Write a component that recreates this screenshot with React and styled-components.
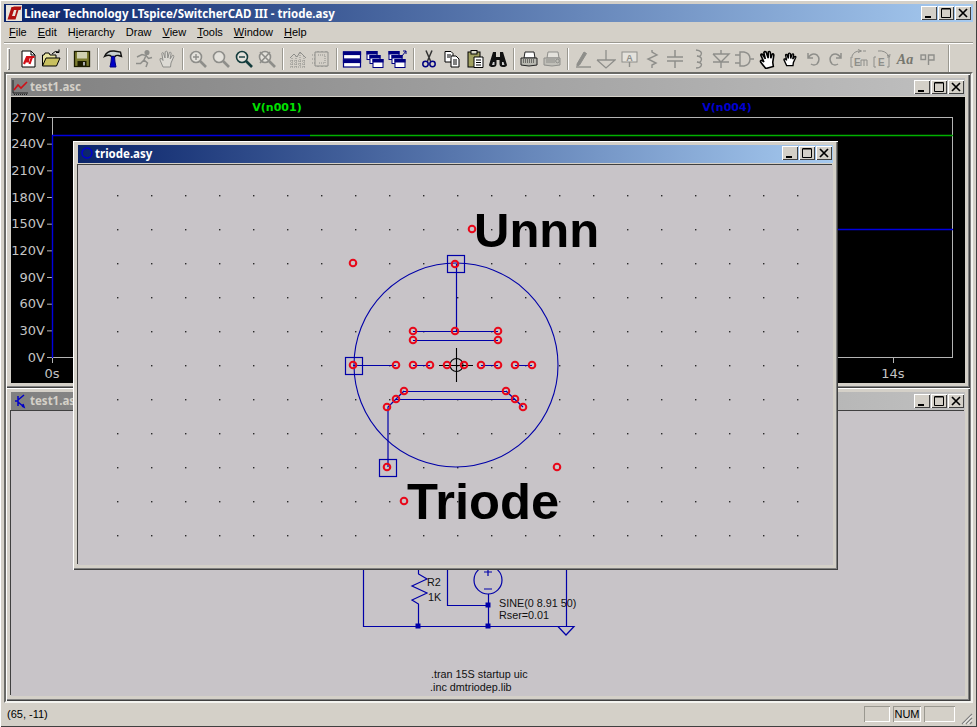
import styled, { createGlobalStyle } from "styled-components";

const GlobalStyle = createGlobalStyle`
  html, body { margin: 0; padding: 0; background: #d4d0c8; }
  body { width: 977px; height: 727px; overflow: hidden; font-family: "Liberation Sans", sans-serif; }
`;

const GREY = "#8e8e8a";
const NAVY = "#000080";
const WIRE = "#0000a8";
const PIN = "#e8081a";

const menus = [
  ["F", "ile"],
  ["E", "dit"],
  ["H", "ierarchy", 1],
  ["", "Draw"],
  ["V", "iew"],
  ["T", "ools"],
  ["W", "indow"],
  ["H", "elp"],
];

const handPath =
  "M6 18 L3 11 Q2.5 9 4.5 9.5 L6 11.5 L4.8 4.5 Q5 3 6.5 4 L8 9 L8.2 2.8 Q9.3 1.6 10.4 2.8 L10.8 9 L12.4 3.4 Q13.6 2.6 14.2 4 L13.2 9.8 L15.6 6.2 Q17 6 16.8 7.6 L14 14 L13.5 18 Z";

function Lens({ color, children }) {
  return (
    <g fill="none" stroke={color}>
      <circle cx="8" cy="8" r="5.5" strokeWidth="1.6" fill="#e4e2dc" />
      <path d="M12 12 L18 18" strokeWidth="2.6" />
      {children}
    </g>
  );
}

function Cascade({ arrow }) {
  return (
    <g fill="#fff" stroke={NAVY}>
      <rect x={arrow ? 1 : 2} y="2.5" width="10" height="8" />
      <rect x={arrow ? 1 : 2} y="2.5" width="10" height="2.5" fill={NAVY} />
      <rect x={arrow ? 4 : 5} y="6.5" width="10" height="8" />
      <rect x={arrow ? 4 : 5} y="6.5" width="10" height="2.5" fill={NAVY} />
      <rect x={arrow ? 7 : 8} y="10.5" width="10" height="8" />
      <rect x={arrow ? 7 : 8} y="10.5" width="10" height="2.5" fill={NAVY} />
      {arrow && <path d="M14 7 L18 2 M15 2 H18 V5" fill="none" />}
    </g>
  );
}

const tools = [
  <g key="new">
    <path d="M4 2 H13 L17 6 V18 H4 Z" fill="#fff" stroke="#000" />
    <path d="M13 2 V6 H17" fill="none" stroke="#000" />
    <path d="M6 15 L9 8 H11 L9.5 12.5 H11 M10.5 8 H16.5 M14 8 L11.5 15" fill="none" stroke="#d01018" strokeWidth="2.2" />
  </g>,
  <g key="open">
    <path d="M1.5 17 V6 H3 L4 4 H8 L9 6 H15 V9" fill="#e8e4a0" stroke="#000" />
    <path d="M1.5 17 L5 9 H19 L15.5 17 Z" fill="#c8c060" stroke="#000" />
    <path d="M11 5 Q14 1 18 3 M18 0.5 V3.5 H15" fill="none" stroke="#000" />
  </g>,
  "sep",
  <g key="save">
    <rect x="2.5" y="2.5" width="15" height="15" fill="#7c7c30" stroke="#1c1c00" strokeWidth="1.3" />
    <rect x="5" y="3" width="10" height="6.5" fill="#d0d0b0" />
    <rect x="5.5" y="12" width="9" height="5.5" fill="#1c1c00" />
    <rect x="11" y="13" width="2" height="3.5" fill="#aaa" />
  </g>,
  "sep",
  <g key="hammer">
    <path d="M1.5 7.5 Q4 1.5 11 2 L17.5 3 L18.5 7.5 L15.5 6.5 Q13 6 12 7.5 H8.5 Q6 5 1.5 7.5 Z" fill="#c8d0d0" stroke="#111" strokeWidth="1.4" />
    <path d="M8.5 7.5 H11.5 L12 13 L13 18 H7 L8 13 Z" fill="#0000c8" stroke={NAVY} />
  </g>,
  "sep",
  <g key="run" fill="none" stroke={GREY} strokeWidth="1.5">
    <circle cx="13" cy="3.5" r="1.8" fill={GREY} />
    <path d="M3 8 L8 5.5 L12 6.5 L10 11 L13.5 14 L12 18 M10 11 L6.5 14.5 L2 14.5 M12 6.5 L14.5 9.5 L18 8.5" />
  </g>,
  <path key="hand" d={handPath} fill="#dcdad4" stroke={GREY} />,
  "sep",
  <Lens key="zin" color={GREY}><path d="M5 8 H11 M8 5 V11" strokeWidth="1.4" /></Lens>,
  <Lens key="zfit" color={GREY} />,
  <Lens key="zout" color="#143c3c"><path d="M5 8 H11" strokeWidth="1.4" /></Lens>,
  <Lens key="zx" color={GREY}><path d="M3 3 L14 14 M13 3 L3 14" strokeWidth="1.6" /></Lens>,
  "sep",
  <g key="wave" fill="none" stroke={GREY}>
    <path d="M2 9 L6 5 L9 8 L12 3 L18 9" />
    <path d="M2 12 H18 M2 15 H18 M2 18 H18 M4 9 V18 M8 7 V18 M12 4 V18 M16 7 V18" strokeDasharray="1 1" />
  </g>,
  <g key="square" fill="none" stroke={GREY}>
    <path d="M4 3 H17 V17 H4 Z" />
    <path d="M1 6 H4 M1 10 H4 M1 14 H4 M7 17 V19 M11 17 V19 M15 17 V19 M7 3 V1 M11 3 V1 M15 3 V1" strokeDasharray="1 1" />
    <path d="M7 6 H14 V14 H7" strokeDasharray="1 1" />
  </g>,
  "sep",
  <g key="tile" fill="#fff" stroke={NAVY} strokeWidth="1.2">
    <rect x="1.5" y="3" width="17" height="7" />
    <rect x="1.5" y="3" width="17" height="2.5" fill={NAVY} />
    <rect x="1.5" y="11" width="17" height="7" />
    <rect x="1.5" y="11" width="17" height="2.5" fill={NAVY} />
  </g>,
  <Cascade key="casc" />,
  <Cascade key="casca" arrow />,
  "sep",
  <g key="cut" fill="none" stroke={NAVY} strokeWidth="1.5">
    <path d="M7 1.5 L11.5 12 M13 1.5 L8.5 12" stroke="#333" />
    <circle cx="6.5" cy="15" r="2.7" />
    <circle cx="13.5" cy="15" r="2.7" />
  </g>,
  <g key="copy" stroke="#000" fill="#fff">
    <path d="M3 2.5 H9 L11 4.5 V13 H3 Z" />
    <path d="M9 7 H14 L17 10 V18 H9 Z" />
    <path d="M5 6 H9 M5 8 H8 M11 11 H15 M11 13 H15 M11 15 H15" fill="none" />
  </g>,
  <g key="paste" stroke="#000">
    <rect x="3" y="3" width="12" height="15" fill="#a0a060" />
    <rect x="6" y="1.5" width="6" height="3.5" fill="#d8d8c8" />
    <path d="M9 8 H18 V18.5 H9 Z" fill="#fff" />
    <path d="M11 11 H16 M11 13.5 H16 M11 16 H16" fill="none" />
  </g>,
  <g key="bino" fill="#111">
    <path d="M5 3 H8 V8 H12 V3 H15 L19 16 Q18.5 18 15 18 Q11.5 18 11.5 15 V11 H8.5 V15 Q8.5 18 5 18 Q1.5 18 1 16 Z" />
    <path d="M5 13 H6.5 V16 H4 Z M14 13 H15.5 L16.5 16 H14 Z" fill="#ccc" />
  </g>,
  "sep",
  <g key="print" stroke="#222">
    <path d="M6 3 H15 L16 9 H5 Z" fill="#fff" />
    <path d="M2 9 H18 V16 Q10 18 2 16 Z" fill="#b8b8b0" />
    <path d="M4 11 H16 M4 13 H16" strokeDasharray="1 1" />
  </g>,
  <g key="print2" stroke={GREY}>
    <path d="M6 3 H16 L17 9 H5 Z" fill="#e4e2dc" />
    <path d="M2 9 H18 V16 Q10 18 2 16 Z" fill="#c0bfb8" />
    <path d="M4 11 H13 M4 13 H13" />
    <circle cx="15.5" cy="12" r="1.8" fill="none" />
  </g>,
  "sep",
  <g key="pencil" fill="none" stroke={GREY}>
    <path d="M4 15 L11 3 L13.5 4.5 L6.5 16 L4 17 Z" fill={GREY} />
    <path d="M3 18 H18" strokeWidth="1.4" />
  </g>,
  <g key="gnd" fill="none" stroke={GREY} strokeWidth="1.3">
    <path d="M10 1 V11 M1 11 H19 L10 19 L1 11" />
  </g>,
  <g key="label" fill="none" stroke={GREY}>
    <rect x="3" y="3" width="15" height="10" fill="#e4e2dc" />
    <path d="M10.5 13 V18" strokeWidth="1.4" />
    <text x="10.5" y="11.5" fontSize="9" fontWeight="700" fontFamily="Liberation Sans" textAnchor="middle" fill={GREY} stroke="none">A</text>
  </g>,
  <path key="res" d="M10 1 V3 L15 6 L6 10 L14 14 L10 16 V19" fill="none" stroke={GREY} strokeWidth="1.4" />,
  <path key="cap" d="M10 1 V8 M2 8 H18 M2 12 H18 M10 12 V19" fill="none" stroke={GREY} strokeWidth="1.5" />,
  <path key="ind" d="M8 1 Q15 2 13 6 Q12 8 9 7 Q15 8 13 12 Q12 14 9 13 Q15 14 13 17 Q12 19 8 19" fill="none" stroke={GREY} strokeWidth="1.4" />,
  <path key="diode" d="M10 1 V5 M2 5 H18 L10 13 L2 5 M2 13 H18 M10 13 V19" fill="none" stroke={GREY} strokeWidth="1.4" />,
  <path key="gate" d="M1 6 H6 M1 14 H6 M6 3 H10 Q16 4 16 10 Q16 16 10 17 H6 Z M16 10 H20" fill="none" stroke={GREY} strokeWidth="1.4" />,
  <path key="open2" d={handPath} fill="#fff" stroke="#000" strokeWidth="1.5" transform="rotate(-15 10 10) scale(1.05)" />,
  <path key="hand2" d={handPath} fill="#fff" stroke="#000" strokeWidth="1.6" transform="translate(1.5 2.5) scale(0.85 0.78)" />,
  <path key="undo" d="M5 4 V9 H10 M5 9 Q9 3 14 6 Q18 10 14 15 Q11 17 8 15" fill="none" stroke={GREY} strokeWidth="1.5" />,
  <path key="redo" d="M15 4 V9 H10 M15 9 Q11 3 6 6 Q2 10 6 15 Q9 17 12 15" fill="none" stroke={GREY} strokeWidth="1.5" />,
  <g key="e1" fill="none" stroke={GREY}>
    <path d="M3 7 Q5 2 11 2 M9 0.5 L12.5 2 L9 3.5 M14 2 H17" />
    <path d="M4 8 H2 V18 H4" />
    <text x="5" y="17" fontSize="10" fontFamily="Liberation Sans" fontWeight="700" fill={GREY} stroke="none">E</text>
    <path d="M12 11 V17 M15 11 V17 M18 11 V17 M12 11 H18" />
  </g>,
  <g key="e2" fill="none" stroke={GREY}>
    <path d="M6 2 Q13 1 17 7 M15 6 L17.5 8 L18 5" />
    <path d="M4 8 H2 V18 H4 M15 8 H17 V18 H15" />
    <text x="6" y="17" fontSize="10" fontFamily="Liberation Sans" fontWeight="700" fill={GREY} stroke="none">E</text>
  </g>,
  <text key="aa" x="10" y="15" textAnchor="middle" fontSize="14" fontStyle="italic" fontWeight="700" fontFamily="Liberation Serif" fill="#77776f">Aa</text>,
  <g key="op" fill="none" stroke={GREY} strokeWidth="1.4">
    <rect x="3" y="6" width="4.5" height="4.5" />
    <path d="M10.5 16 V6 H16 V11 H10.5" />
  </g>,
];

function WindowControls({ small }) {
  return (
    <CaptionButtons $small={small}>
      <CaptionButton $gap>
        <svg width="16" height="14" viewBox="0 0 16 14"><rect x="4" y="10" width="6" height="2" fill="#000" /></svg>
      </CaptionButton>
      <CaptionButton $gap>
        <svg width="16" height="14" viewBox="0 0 16 14"><path d="M3.5 3 H12.5 V11.5 H3.5 Z M3.5 2.5 H12.5" fill="none" stroke="#000" /></svg>
      </CaptionButton>
      <CaptionButton>
        <svg width="16" height="14" viewBox="0 0 16 14"><path d="M4 3 L12 11 M12 3 L4 11" stroke="#000" strokeWidth="1.7" /></svg>
      </CaptionButton>
    </CaptionButtons>
  );
}

function PlotWaves() {
  const volts = [270, 240, 210, 180, 150, 120, 90, 60, 30, 0];
  return (
    <PlotSvg width="954" height="286" viewBox="11 97 954 286">
      <rect x="52.5" y="117.5" width="900" height="240" fill="none" stroke="#b4b4b4" />
      {volts.map((v, i) => {
        const y = 117.5 + i * 26.67;
        return (
          <g key={v}>
            <path d={`M47 ${y} H52`} stroke="#b4b4b4" />
            <PlotLabel x="45" y={y + 4} textAnchor="end">{v}V</PlotLabel>
          </g>
        );
      })}
      <path d="M52.5 358 V363 M893.5 358 V363" stroke="#b4b4b4" />
      <PlotLabel x="52" y="378" textAnchor="middle">0s</PlotLabel>
      <PlotLabel x="893" y="378" textAnchor="middle">14s</PlotLabel>
      <TraceLabel x="277" y="111" textAnchor="middle" fill="#00e000">V(n001)</TraceLabel>
      <TraceLabel x="727" y="111" textAnchor="middle" fill="#0000d0">V(n004)</TraceLabel>
      <path d="M310 135.5 H953" stroke="#00b000" strokeWidth="1.4" />
      <path d="M52.5 358 V135.5 H310" stroke="#0000e0" strokeWidth="1.4" fill="none" />
      <path d="M838 229.5 H953" stroke="#0000e0" strokeWidth="1.4" />
    </PlotSvg>
  );
}

function Schematic() {
  return (
    <PlotSvg width="954" height="285" viewBox="11 411 954 285">
      <g fill="none" stroke={WIRE} strokeWidth="1.2">
        <path d="M363.5 540 V626.5 H566.5 V540" />
        <path d="M418.5 560 V574 L427 579 L412 586 L427 593 L412 600 L418.5 604 V626" />
        <path d="M447.5 540 V605.5 H488.5 M488.5 594 V626" />
        <circle cx="488" cy="580" r="14" />
        <path d="M484 572 H492 M488 568 V576 M484 589 H492" />
        <path d="M558 626.5 H574 L566 635 Z" />
      </g>
      <g fill={WIRE}>
        <rect x="415.5" y="623.5" width="5" height="5" />
        <rect x="485.5" y="623.5" width="5" height="5" />
        <rect x="485.5" y="602.5" width="5" height="5" />
      </g>
      <NetText x="427" y="586">R2</NetText>
      <NetText x="428" y="601">1K</NetText>
      <NetText x="499" y="607">SINE(0 8.91 50)</NetText>
      <NetText x="499" y="619">Rser=0.01</NetText>
      <NetText x="431" y="678">.tran 15S startup uic</NetText>
      <NetText x="430" y="691">.inc dmtriodep.lib</NetText>
    </PlotSvg>
  );
}

function TriodeSymbol() {
  const dots = [];
  for (let x = 117; x < 800; x += 34) {
    for (let y = 195; y < 540; y += 34) {
      dots.push(<rect key={`${x}-${y}`} x={x} y={y} width="1.4" height="1.4" fill="#2a2a2a" />);
    }
  }
  const pins = [
    [353, 263], [472, 229], [557, 467], [404, 501], [387, 467], [455, 264],
    [413, 331], [413, 340], [498, 331], [498, 340], [455, 331],
    [353, 365], [396, 365], [413, 365], [430, 365], [447, 365], [464, 365],
    [481, 365], [498, 365], [515, 365], [532, 365],
    [404, 391], [396, 399], [387, 407], [506, 391], [515, 399], [523, 407],
  ];
  return (
    <PlotSvg width="755" height="400" viewBox="78 165 755 400">
      {dots}
      <g fill="none" stroke={WIRE} strokeWidth="1.2">
        <circle cx="456" cy="365" r="102" strokeWidth="1.1" />
        <rect x="447.5" y="255.5" width="17" height="17" />
        <rect x="345.5" y="357.5" width="17" height="17" />
        <rect x="379.5" y="459.5" width="17" height="17" />
        <path d="M456.5 264 V331" />
        <path d="M413 331.5 H498 M413 340.5 H498" />
        <path d="M353 365.5 H396 M413 365.5 H430 M447 365.5 H464 M481 365.5 H498 M515 365.5 H532" />
        <path d="M404 391.5 H506 M396 399.5 H515" />
        <path d="M388 467 V407 L404 391 M506 391 L523 407" />
      </g>
      <g fill="none" stroke="#000" strokeWidth="1.1">
        <circle cx="456.5" cy="365" r="6.5" />
        <path d="M439 365.5 H473 M456.5 348 V382" />
      </g>
      <g fill="none" stroke={PIN} strokeWidth="2">
        {pins.map(([x, y]) => <circle key={`${x}-${y}`} cx={x} cy={y} r="3.3" />)}
      </g>
      <BigText x="474" y="247" $size={49}>Unnn</BigText>
      <BigText x="407" y="519" $size={50.7}>Triode</BigText>
    </PlotSvg>
  );
}

export default function App() {
  return (
    <Frame>
      <GlobalStyle />
      <AppCaption>
        <Logo>
          <svg width="16" height="16" viewBox="0 0 16 16">
            <rect width="16" height="16" fill="#e8e4dc" />
            <path d="M1.5 14.5 L5.5 2 H9 L6 11 H9 L8 14.5 Z M7.5 1.5 H15.5 L14.5 5 H12.5 L9.5 14.5 H8 L10.5 5 H7 Z" fill="#b01010" />
          </svg>
        </Logo>
        <AppTitle>Linear Technology LTspice/SwitcherCAD III - triode.asy</AppTitle>
        <WindowControls />
      </AppCaption>
      <MenuBar>
        {menus.map(([key, rest, second]) => (
          <MenuItem key={rest}>
            {second ? <>H<u>i</u>{rest.slice(1)}</> : <><u>{key}</u>{rest}</>}
          </MenuItem>
        ))}
      </MenuBar>
      <ToolBar>
        <Gripper />
        {tools.map((tool, i) =>
          tool === "sep" ? (
            <ToolSep key={i} />
          ) : (
            <ToolButton key={i}>
              <svg width="20" height="20" viewBox="0 0 20 20">{tool}</svg>
            </ToolButton>
          )
        )}
        <ToolEnd />
      </ToolBar>
      <Desktop>
        <MdiWindow $x={0} $y={0} $w={964} $h={314}>
          <MdiCaption>
            <MdiIcon>
              <svg width="17" height="16" viewBox="0 0 17 16">
                <path d="M1 1 V14 H16" fill="none" stroke="#222" />
                <path d="M2 11 L6 6 L9 9 L15 3" fill="none" stroke="#d01018" strokeWidth="1.6" />
                <path d="M2 15.5 H16" stroke="#222" strokeDasharray="1 1" />
              </svg>
            </MdiIcon>
            <MdiTitle>test1.asc</MdiTitle>
            <WindowControls small />
          </MdiCaption>
          <PlotBody><PlotWaves /></PlotBody>
        </MdiWindow>
        <MdiWindow $x={0} $y={314} $w={964} $h={313}>
          <MdiCaption>
            <MdiIcon>
              <svg width="17" height="16" viewBox="0 0 17 16">
                <path d="M3 8 H6 M6 3 V13 M6 7 L12 2 M6 9 L12 14 M10 13 L12 14 L11 11" fill="none" stroke="#0000c8" strokeWidth="1.5" />
              </svg>
            </MdiIcon>
            <MdiTitle>test1.asc</MdiTitle>
            <WindowControls small />
          </MdiCaption>
          <SheetBody><Schematic /></SheetBody>
        </MdiWindow>
        <MdiWindow $x={67} $y={67} $w={765} $h={429} $front>
          <MdiCaption $active>
            <MdiIcon $narrow>
              <svg width="14" height="14" viewBox="0 0 14 14">
                <circle cx="7" cy="7" r="5" fill="none" stroke="#0000d0" strokeWidth="1.5" />
              </svg>
            </MdiIcon>
            <MdiTitle $active>triode.asy</MdiTitle>
            <WindowControls small />
          </MdiCaption>
          <SheetBody><TriodeSymbol /></SheetBody>
        </MdiWindow>
      </Desktop>
      <StatusBar>
        <StatusText>(65, -11)</StatusText>
        <StatusCell $w={26} />
        <StatusCell $w={28}>NUM</StatusCell>
        <StatusCell $w={31} />
        <Grip>
          <svg width="13" height="13" viewBox="0 0 13 13">
            <path d="M12 2 L2 12 M12 6 L6 12 M12 10 L10 12" stroke="#808080" strokeWidth="1.2" />
            <path d="M12 3.5 L3.5 12 M12 7.5 L7.5 12" stroke="#fff" />
          </svg>
        </Grip>
      </StatusBar>
    </Frame>
  );
}

const Frame = styled.div`
  width: 977px;
  height: 727px;
  box-sizing: border-box;
  padding: 4px 4px 2px;
  display: flex;
  flex-direction: column;
  background: #d4d0c8;
  box-shadow: inset 1px 1px #fff, inset -1px -1px #404040;
`;

const AppCaption = styled.div`
  height: 18px;
  flex: none;
  display: flex;
  align-items: center;
  padding-left: 2px;
  background: linear-gradient(90deg, #0a246a, #a6caf0);
`;

const Logo = styled.div`
  width: 16px;
  height: 16px;
  margin-right: 2px;
  flex: none;
  svg { display: block; }
`;

const AppTitle = styled.div`
  flex: 1;
  color: #fff;
  font: 700 11.5px "Noto Sans", "Liberation Sans", sans-serif;
  white-space: nowrap;
`;

const CaptionButtons = styled.div`
  display: flex;
  flex: none;
  align-items: center;
  margin-right: ${({ $small }) => ($small ? "1px" : "2px")};
`;

const CaptionButton = styled.div`
  width: 16px;
  height: 14px;
  margin-right: ${({ $gap }) => ($gap ? "1px" : "0")};
  background: #d4d0c8;
  box-shadow: inset 1px 1px #fff, inset -1px -1px #404040;
  svg { display: block; }
`;

const MenuBar = styled.div`
  height: 19px;
  box-sizing: border-box;
  flex: none;
  margin-top: 1px;
  margin-bottom: 1px;
  padding: 0 0 2px 5px;
  display: flex;
  align-items: center;
  gap: 11px;
  box-shadow: 0 1px #9a9890, 0 2px #fff;
`;

const MenuItem = styled.span`
  font: 400 11px "Liberation Sans", sans-serif;
  color: #000;
  white-space: nowrap;
`;

const ToolBar = styled.div`
  height: 28px;
  flex: none;
  margin-top: 2px;
  display: flex;
  align-items: center;
  padding-left: 3px;
`;

const Gripper = styled.div`
  width: 3px;
  height: 22px;
  margin-right: 6.5px;
  background: #d4d0c8;
  box-shadow: inset 1px 1px #fff, inset -1px -1px #808080;
`;

const ToolButton = styled.div`
  width: 23px;
  height: 22px;
  flex: none;
  display: flex;
  align-items: center;
  justify-content: center;
`;

const ToolSep = styled.div`
  width: 2px;
  height: 22px;
  flex: none;
  margin: 0 3px;
  background: linear-gradient(90deg, #9a9890 50%, #fff 50%);
`;

const ToolEnd = styled(ToolSep)`
  margin-left: 8px;
  height: 28px;
`;

const Desktop = styled.div`
  position: relative;
  flex: 1;
  margin-top: -1px;
  border: 2px solid;
  border-color: #6a6a66 #f4f4f0 #f4f4f0 #6a6a66;
  background: #808080;
  overflow: hidden;
`;

const MdiWindow = styled.div`
  position: absolute;
  left: ${({ $x }) => $x}px;
  top: ${({ $y }) => $y}px;
  width: ${({ $w }) => $w}px;
  height: ${({ $h }) => $h}px;
  box-sizing: border-box;
  padding: 4px 5px 5px 4px;
  z-index: ${({ $front }) => ($front ? 2 : 1)};
  background: #d4d0c8;
  box-shadow: inset 1px 1px #fff, inset -1px -1px #404040, inset -2px -2px #808080;
  display: flex;
  flex-direction: column;
`;

const MdiCaption = styled.div`
  height: 18px;
  box-sizing: border-box;
  flex: none;
  margin-left: 1px;
  margin-bottom: ${({ $active }) => ($active ? "2px" : "1px")};
  padding-bottom: ${({ $active }) => ($active ? "2px" : "1px")};
  display: flex;
  align-items: center;
  background: ${({ $active }) =>
    $active ? "linear-gradient(90deg, #0a246a, #a6caf0)" : "linear-gradient(90deg, #808080, #c0c0c0)"};
`;

const MdiIcon = styled.div`
  width: ${({ $narrow }) => ($narrow ? "15px" : "17px")};
  height: 16px;
  margin-left: 1px;
  flex: none;
  display: flex;
  align-items: center;
  justify-content: center;
`;

const MdiTitle = styled.div`
  flex: 1;
  margin-left: 1px;
  color: ${({ $active }) => ($active ? "#fff" : "#d4d0c8")};
  font: 700 11.5px "Noto Sans", "Liberation Sans", sans-serif;
  white-space: nowrap;
`;

const PlotBody = styled.div`
  flex: 1;
  margin-left: 1px;
  background: #000;
  overflow: hidden;
`;

const SheetBody = styled.div`
  flex: 1;
  margin-left: 1px;
  background: #c8c4c8;
  box-shadow: -1px -1px #404040;
  overflow: hidden;
`;

const PlotSvg = styled.svg`
  display: block;
`;

const PlotLabel = styled.text`
  font: 400 13px "DejaVu Sans", sans-serif;
  fill: #c4c4c4;
`;

const TraceLabel = styled.text`
  font: 700 11px "DejaVu Sans", sans-serif;
`;

const NetText = styled.text`
  font: 400 10.8px "Liberation Sans", sans-serif;
  fill: #111;
`;

const BigText = styled.text`
  font: 700 ${({ $size }) => $size}px "Liberation Sans", sans-serif;
  fill: #000;
`;

const StatusBar = styled.div`
  height: 22px;
  flex: none;
  display: flex;
  align-items: center;
  gap: 3px;
`;

const StatusText = styled.div`
  flex: 1;
  padding-left: 3px;
  font: 400 11px "Liberation Sans", sans-serif;
  color: #000;
`;

const StatusCell = styled.div`
  width: ${({ $w }) => $w}px;
  height: 16px;
  flex: none;
  box-shadow: inset 1px 1px #9a9890, inset -1px -1px #fff;
  font: 400 11px "Liberation Sans", sans-serif;
  line-height: 16px;
  text-align: center;
  color: #000;
`;

const Grip = styled.div`
  width: 13px;
  height: 13px;
  margin-left: 2px;
  align-self: flex-end;
  svg { display: block; }
`;
